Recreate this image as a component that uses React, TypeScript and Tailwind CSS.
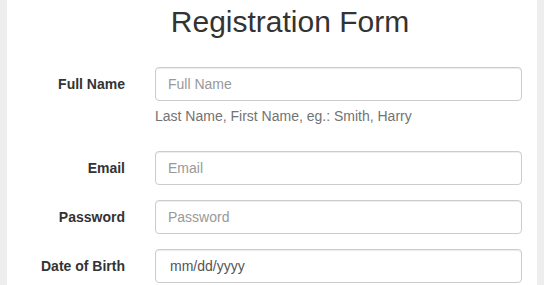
import React from "react";

const font = { fontFamily: '"Liberation Sans", Arial, Helvetica, sans-serif' };

function Row({
  label,
  children,
  help,
}: {
  label: string;
  children: React.ReactNode;
  help?: string;
}) {
  return (
    <div className="flex mb-[15px]">
      <label className="w-[133px] shrink-0 pr-[15px] pt-[7px] text-right text-[14px] leading-[20px] font-bold text-[#333]">
        {label}
      </label>
      <div className="flex-1 px-[15px]">
        {children}
        {help && (
          <p className="mt-[5px] mb-[10px] text-[14px] leading-[20px] text-[#737373]">{help}</p>
        )}
      </div>
    </div>
  );
}

function Field({ placeholder, type = "text" }: { placeholder: string; type?: string }) {
  return (
    <input
      type={type}
      placeholder={placeholder}
      className="block w-full h-[34px] px-[12px] py-[6px] text-[14px] leading-[20px] text-[#555] bg-white border border-[#ccc] rounded-[4px] shadow-[inset_0_1px_1px_rgba(0,0,0,0.075)] placeholder:text-[#999] outline-none"
      style={font}
    />
  );
}

export default function App() {
  return (
    <div className="w-[544px] h-[285px] bg-[#eeeeee] overflow-hidden" style={font}>
      <div className="mx-[7px] h-full bg-white">
        <h2 className="pt-[5px] pl-[36px] text-center text-[30px] leading-[33px] font-normal text-[#333]">
          Registration Form
        </h2>
        <div className="mt-[29px]">
          <Row label="Full Name" help="Last Name, First Name, eg.: Smith, Harry">
            <Field placeholder="Full Name" />
          </Row>
          <Row label="Email">
            <Field placeholder="Email" type="email" />
          </Row>
          <Row label="Password">
            <Field placeholder="Password" type="password" />
          </Row>
          <Row label="Date of Birth">
            <div className="w-full h-[34px] pl-[14px] pr-[12px] py-[6px] text-[14px] leading-[20px] text-[#555] bg-white border border-[#ccc] rounded-[4px] shadow-[inset_0_1px_1px_rgba(0,0,0,0.075)]">
              mm/dd/yyyy
            </div>
          </Row>
        </div>
      </div>
    </div>
  );
}
